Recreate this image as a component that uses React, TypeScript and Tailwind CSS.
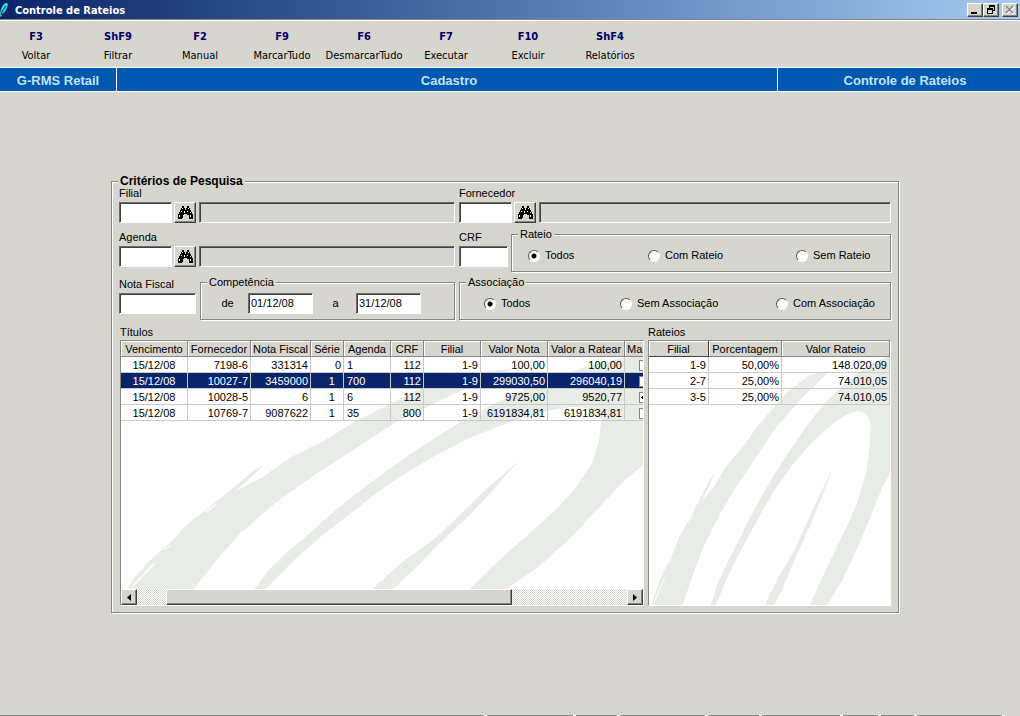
import React from 'react';

const UI_FONT = "font-['Liberation_Sans',Arial,sans-serif]";
const MENU_FONT = "font-['DejaVu_Sans_Condensed','DejaVu_Sans',sans-serif]";

const SUNKEN = 'border border-t-[#6b6b68] border-l-[#6b6b68] border-b-white border-r-white shadow-[inset_1px_1px_0_#404040]';
const RAISED = 'bg-[#d6d5ce] border border-t-white border-l-white border-b-[#404040] border-r-[#404040] shadow-[inset_-1px_-1px_0_#868682]';
const ETCHED = 'border border-[#868682] shadow-[inset_1px_1px_0_#fff,1px_1px_0_#fff]';

const TOOLBAR = [
  { hotkey: 'F3', label: 'Voltar' },
  { hotkey: 'ShF9', label: 'Filtrar' },
  { hotkey: 'F2', label: 'Manual' },
  { hotkey: 'F9', label: 'MarcarTudo' },
  { hotkey: 'F6', label: 'DesmarcarTudo' },
  { hotkey: 'F7', label: 'Executar' },
  { hotkey: 'F10', label: 'Excluir' },
  { hotkey: 'ShF4', label: 'Relatórios' },
];

const TITULOS_COLUMNS = [
  { title: 'Vencimento', width: 'w-[67px]' },
  { title: 'Fornecedor', width: 'w-[63px]' },
  { title: 'Nota Fiscal', width: 'w-[60px]' },
  { title: 'Série', width: 'w-[33px]' },
  { title: 'Agenda', width: 'w-[47px]' },
  { title: 'CRF', width: 'w-[33px]' },
  { title: 'Filial', width: 'w-[57px]' },
  { title: 'Valor Nota', width: 'w-[67px]' },
  { title: 'Valor a Ratear', width: 'w-[77px]' },
];

const TITULOS = [
  { vencimento: '15/12/08', fornecedor: '7198-6', nota: '331314', serie: '0', agenda: '1', crf: '112', filial: '1-9', valor: '100,00', ratear: '100,00', marcado: false },
  { vencimento: '15/12/08', fornecedor: '10027-7', nota: '3459000', serie: '1  ', agenda: '700', crf: '112', filial: '1-9', valor: '299030,50', ratear: '296040,19', marcado: false, selected: true },
  { vencimento: '15/12/08', fornecedor: '10028-5', nota: '6', serie: '1  ', agenda: '6', crf: '112', filial: '1-9', valor: '9725,00', ratear: '9520,77', marcado: true },
  { vencimento: '15/12/08', fornecedor: '10769-7', nota: '9087622', serie: '1  ', agenda: '35', crf: '800', filial: '1-9', valor: '6191834,81', ratear: '6191834,81', marcado: false },
];

const RATEIOS = [
  { filial: '1-9', porcentagem: '50,00%', valor: '148.020,09' },
  { filial: '2-7', porcentagem: '25,00%', valor: '74.010,05' },
  { filial: '3-5', porcentagem: '25,00%', valor: '74.010,05' },
];

const BinocularsIcon = () => (
  <svg width="15" height="13" viewBox="0 0 15 13" shapeRendering="crispEdges" aria-hidden="true">
    <path d="M4 0h2v2h1v2h1V2h1V0h2v2h1v2h1v2h1v2h1v5h-4V9H9V8H6v1H5v3H4v1H0V8h1V6h1V4h1V2h1z" fill="#000" />
    <path d="M4 2h1v1H4zM10 2h1v1h-1zM3 5h1v1H3zM6 5h1v2H6zM9 5h1v1H9zM12 6h1v1h-1zM1 9h1v2H1zM12 9h1v2h-1z" fill="#fff" />
  </svg>
);

const FeatherIcon = () => (
  <svg width="12" height="16" viewBox="0 0 12 16" aria-hidden="true">
    <path d="M0 14C0 9 2 3 5 1.500c3-1.500 3.500 1 2 4C6 9 4 11 2 12l-1 3z" fill="#35dcd8" />
    <path d="M1 13C2 9 4 6 6 4" stroke="#0a246a" strokeWidth="1" fill="none" />
  </svg>
);

// Brand strokes behind the grid rows, stretched to whatever size the grid has
const Watermark = () => (
  <svg className="absolute inset-0 h-full w-full" viewBox="0 0 524 248" preserveAspectRatio="none" aria-hidden="true">
    <g fill="#e7ede6">
      <path d="M6 247L14 236L26 222L50 201L66 184L85 169L110 149L131 131L144 123L131 136L115 150L141 137L169 117L205 99L234 81L300 48L350 32L393 28L330 55L278 80L233 109L191 136L155 162L120 192L96 219L73 248H10Z" />
      <path d="M134 248L148 229L169 209L191 191L219 166L254 139L289 114L317 96L341 81Q390 52 440 35Q480 20 524 14V124L506 139L485 161L454 194L419 226L387 248H350L383 216L408 194L436 169L457 146L473 122L480 99L482 80Q478 66 455 66Q430 67 394 80L352 96L313 116L278 137L254 154L226 176L205 192L176 217L145 248Z" />
      <path d="M400 119L369 146L345 169L317 196L285 219L252 248H273L296 227L320 202L348 176L369 154Z" />
    </g>
    <path d="M11 246L34 222M43 209L50 204M85 171L96 163" stroke="#fff" strokeWidth="1.5" fill="none" />
  </svg>
);

interface FieldProps {
  id: string;
  label: string;
  width: string;
}

const Field: React.FC<FieldProps> = ({ id, label, width }) => (
  <div className="flex flex-col gap-[3px]">
    <label htmlFor={id} className="leading-3 whitespace-nowrap">{label}</label>
    <input id={id} type="text" className={`h-[21px] bg-white px-1 ${width} ${SUNKEN}`} />
  </div>
);

const LookupField: React.FC<{ id: string; label: string }> = ({ id, label }) => (
  <div className="flex items-end">
    <div className="w-[53px]">
      <Field id={id} label={label} width="w-[53px]" />
    </div>
    <button type="button" aria-label={`Pesquisar ${label}`} className={`ml-0.5 flex h-[21px] w-[22px] shrink-0 items-center justify-center ${RAISED}`}>
      <BinocularsIcon />
    </button>
    <input type="text" readOnly aria-label={`Descrição ${label}`} className={`ml-[3px] h-[21px] min-w-0 flex-1 bg-[#d6d5ce] px-1 ${SUNKEN}`} />
  </div>
);

interface GroupProps {
  title: string;
  className?: string;
  bodyClassName?: string;
  children: React.ReactNode;
}

const Group: React.FC<GroupProps> = ({ title, className = '', bodyClassName = '', children }) => (
  <fieldset className={`min-w-0 ${ETCHED} ${className}`}>
    <legend className="ml-1.5 bg-[#d6d5ce] px-0.5 leading-3">{title}</legend>
    <div className={`flex h-[31px] items-center ${bodyClassName}`}>{children}</div>
  </fieldset>
);

interface RadioProps {
  name: string;
  label: string;
  defaultChecked?: boolean;
  className?: string;
}

const Radio: React.FC<RadioProps> = ({ name, label, defaultChecked, className = '' }) => (
  <label className={`flex shrink-0 items-center gap-[5px] whitespace-nowrap ${className}`}>
    <input
      type="radio"
      name={name}
      defaultChecked={defaultChecked}
      className="h-3 w-3 appearance-none rounded-full border border-t-[#555] border-l-[#555] border-r-white border-b-white bg-white checked:bg-[radial-gradient(circle,#000_2px,#fff_3px)]"
    />
    {label}
  </label>
);

const DateInput: React.FC<{ label: string; value: string }> = ({ label, value }) => (
  <input type="text" aria-label={label} defaultValue={value} className={`h-[21px] w-[65px] bg-white px-0.5 pb-0.5 ${SUNKEN}`} />
);

const HEAD = 'h-4 border-r border-b border-[#868682] bg-[#d6d5ce] p-0 pt-px text-center font-normal whitespace-nowrap shadow-[inset_1px_1px_0_#fff]';
const CELL = 'h-4 border-r border-b border-[#c9c9c6] p-0 pt-px whitespace-pre';

const TitulosTable = () => (
  <table className="relative w-[545px] table-fixed border-separate border-spacing-0 leading-[14px]">
    <thead>
      <tr>
        {TITULOS_COLUMNS.map((column) => (
          <th key={column.title} className={`${HEAD} ${column.width}`}>{column.title}</th>
        ))}
        <th className={`${HEAD} w-[41px]`}>
          <span className="block pl-0.5 text-left">Ma</span>
        </th>
      </tr>
    </thead>
    <tbody>
      {TITULOS.map((row) => (
        <tr key={row.fornecedor} className={row.selected ? 'bg-[#0a246a] text-white' : ''}>
          <td className={`${CELL} text-center`}>{row.vencimento}</td>
          <td className={`${CELL} pr-0.5 text-right`}>{row.fornecedor}</td>
          <td className={`${CELL} pr-0.5 text-right`}>{row.nota}</td>
          <td className={`${CELL} pr-0.5 text-right`}>{row.serie}</td>
          <td className={`${CELL} pl-[3px]`}>{row.agenda}</td>
          <td className={`${CELL} pr-0.5 text-right`}>{row.crf}</td>
          <td className={`${CELL} pr-0.5 text-right`}>{row.filial}</td>
          <td className={`${CELL} pr-0.5 text-right`}>{row.valor}</td>
          <td className={`${CELL} pr-0.5 text-right`}>{row.ratear}</td>
          <td className={CELL}>
            <input
              type="checkbox"
              aria-label={`Marcar ${row.fornecedor}`}
              defaultChecked={row.marcado}
              className="mx-auto block h-[11px] w-[13px] appearance-none border border-[#868682] bg-white checked:bg-[radial-gradient(circle_at_30%_50%,#000_2px,#fff_2px)]"
            />
          </td>
        </tr>
      ))}
    </tbody>
  </table>
);

const RateiosTable = () => (
  <table className="relative w-full table-fixed border-separate border-spacing-0 leading-[14px]">
    <thead>
      <tr>
        <th className={`${HEAD} w-[60px] border-r-[#404040] border-b-[#404040]`}>Filial</th>
        <th className={`${HEAD} w-[73px]`}>Porcentagem</th>
        <th className={HEAD}>Valor Rateio</th>
      </tr>
    </thead>
    <tbody>
      {RATEIOS.map((row) => (
        <tr key={row.filial}>
          <td className={`${CELL} pr-0.5 text-right`}>{row.filial}</td>
          <td className={`${CELL} pr-0.5 text-right`}>{row.porcentagem}</td>
          <td className={`${CELL} pr-0.5 text-right`}>{row.valor}</td>
        </tr>
      ))}
    </tbody>
  </table>
);

const HorizontalScrollbar = () => (
  <div className="relative flex h-4 bg-[repeating-conic-gradient(#fff_0_25%,#d6d5ce_0_50%)] bg-[length:2px_2px]">
    <button type="button" aria-label="Rolar para a esquerda" className={`flex w-4 items-center justify-center ${RAISED}`}>
      <svg width="4" height="7" viewBox="0 0 4 7" aria-hidden="true"><path d="M4 0v7L0 3.5z" /></svg>
    </button>
    <div className="flex flex-1 pr-[115px] pl-[29px]">
      <div className={`flex-1 ${RAISED}`} />
    </div>
    <button type="button" aria-label="Rolar para a direita" className={`flex w-4 items-center justify-center ${RAISED}`}>
      <svg width="4" height="7" viewBox="0 0 4 7" aria-hidden="true"><path d="M0 0v7l4-3.5z" /></svg>
    </button>
  </div>
);

const TitleBar = () => (
  <header className="flex h-[19px] items-center bg-linear-to-r from-[#0a246a] to-[#a6caf0] pr-0.5">
    <FeatherIcon />
    <h1 className={`ml-[3px] flex-1 pt-0.5 text-[11px] leading-[14px] font-bold text-white ${MENU_FONT}`}>Controle de Rateios</h1>
    <button type="button" aria-label="Minimizar" className={`flex h-3.5 w-4 items-center justify-center ${RAISED}`}>
      <svg width="10" height="9" viewBox="0 0 10 9" aria-hidden="true"><path d="M1 7h6v2H1z" /></svg>
    </button>
    <button type="button" aria-label="Restaurar" className={`flex h-3.5 w-4 items-center justify-center ${RAISED}`}>
      <svg width="10" height="9" viewBox="0 0 10 9" shapeRendering="crispEdges" aria-hidden="true">
        <path d="M3 0h6v6H7V5h1V2H4v1H3zM1 3h6v6H1zM2 5v3h4V5z" fillRule="evenodd" />
      </svg>
    </button>
    <button type="button" aria-label="Fechar" className={`ml-[3px] flex h-3.5 w-4 items-center justify-center ${RAISED}`}>
      <svg width="10" height="9" viewBox="0 0 10 9" aria-hidden="true">
        <path d="M2 2l7 7M9 2L2 9" stroke="#fff" strokeWidth="1.5" />
        <path d="M1 1l7 7M8 1L1 8" stroke="#868682" strokeWidth="1.5" />
      </svg>
    </button>
  </header>
);

const Toolbar = () => (
  <nav className={`flex h-12 border-t border-[#868682] pt-2.5 text-[11px] shadow-[inset_0_1px_0_#fff] ${MENU_FONT}`}>
    {TOOLBAR.map((item) => (
      <button key={item.hotkey} type="button" className="flex h-[33px] w-[82px] shrink-0 flex-col items-center gap-[5px] first:mr-[5px] first:w-[72px]">
        <span className="leading-[14px] font-bold text-[#000066]">{item.hotkey}</span>
        <span className="leading-[14px] whitespace-nowrap text-black">{item.label}</span>
      </button>
    ))}
  </nav>
);

const Banner = () => (
  <div className="flex h-[25px] items-stretch border-y border-white bg-[#0058b0] text-[13px] font-bold text-[#c4e2f8]">
    <div className="flex w-[117px] items-center justify-center border-r border-white pt-0.5">G-RMS Retail</div>
    <div className="flex flex-1 items-center justify-center border-r border-white pt-0.5 pl-1">Cadastro</div>
    <div className="flex w-[242px] items-center justify-center pt-0.5 pl-3">Controle de Rateios</div>
  </div>
);

const StatusStrip = () => (
  <footer className="flex h-px gap-[3px] bg-white">
    <div className="w-[484px] bg-[#868682]" />
    <div className="w-[86px] bg-[#868682]" />
    <div className="w-[41px] bg-[#868682]" />
    <div className="w-[85px] bg-[#868682]" />
    <div className="w-[51px] bg-[#868682]" />
    <div className="w-[78px] bg-[#868682]" />
    <div className="w-[35px] bg-[#868682]" />
    <div className="w-[33px] bg-[#868682]" />
    <div className="w-[85px] bg-[#868682]" />
    <div className="flex-1 bg-[#d6d5ce]" />
  </footer>
);

const App: React.FC = () => {
  return (
    <div className={`flex min-h-screen flex-col bg-[#d6d5ce] text-[11px] text-black ${UI_FONT}`}>
      <TitleBar />
      <Toolbar />
      <Banner />

      <main className="flex-1 pt-[83px] pr-[121px] pl-[111px]">
        <fieldset className={`min-w-0 px-[7px] pb-1.5 ${ETCHED}`}>
          <legend className="-ml-px bg-[#d6d5ce] px-0.5 text-xs leading-3 font-bold">Critérios de Pesquisa</legend>

          {/* Search criteria */}
          <div className="grid grid-cols-[336px_1fr] gap-x-1 gap-y-1">
            <div className="pb-px"><LookupField id="filial" label="Filial" /></div>
            <div className="pb-px"><LookupField id="fornecedor" label="Fornecedor" /></div>

            <div className="pt-[3px]"><LookupField id="agenda" label="Agenda" /></div>
            <div className="flex items-start gap-[3px]">
              <div className="pt-[3px]"><Field id="crf" label="CRF" width="w-[49px]" /></div>
              <Group title="Rateio" className="flex-1" bodyClassName="pl-4">
                <Radio name="rateio" label="Todos" defaultChecked className="w-[120px]" />
                <Radio name="rateio" label="Com Rateio" className="w-[148px]" />
                <Radio name="rateio" label="Sem Rateio" />
              </Group>
            </div>

            <div className="flex items-start gap-1">
              <div className="pt-0.5"><Field id="nota" label="Nota Fiscal" width="w-[77px]" /></div>
              <Group title="Competência" className="flex-1">
                <span className="w-[47px] pl-1.5 text-center">de</span>
                <DateInput label="Competência de" value="01/12/08" />
                <span className="w-[43px] pl-0.5 text-center">a</span>
                <DateInput label="Competência a" value="31/12/08" />
              </Group>
            </div>
            <Group title="Associação" bodyClassName="pl-6">
              <Radio name="associacao" label="Todos" defaultChecked className="w-[136px]" />
              <Radio name="associacao" label="Sem Associação" className="w-[156px]" />
              <Radio name="associacao" label="Com Associação" />
            </Group>
          </div>

          {/* Result grids */}
          <div className="mt-1.5 flex gap-1 pl-px">
            <section className="min-w-0 flex-1">
              <h2 className="mb-0.5 leading-3">Títulos</h2>
              <div className="flex h-[266px] flex-col border-t border-r border-b border-l border-t-[#868682] border-r-white border-b-white border-l-[#868682] bg-white">
                <div className="relative flex-1 overflow-hidden">
                  <Watermark />
                  <TitulosTable />
                </div>
                <HorizontalScrollbar />
              </div>
            </section>
            <section className="w-[243px]">
              <h2 className="mb-0.5 leading-3">Rateios</h2>
              <div className="relative h-[266px] overflow-hidden border-t border-r border-b border-l border-t-[#868682] border-r-white border-b-white border-l-[#868682] bg-white">
                <Watermark />
                <RateiosTable />
              </div>
            </section>
          </div>
        </fieldset>
      </main>

      <StatusStrip />
    </div>
  );
};

export default App;
